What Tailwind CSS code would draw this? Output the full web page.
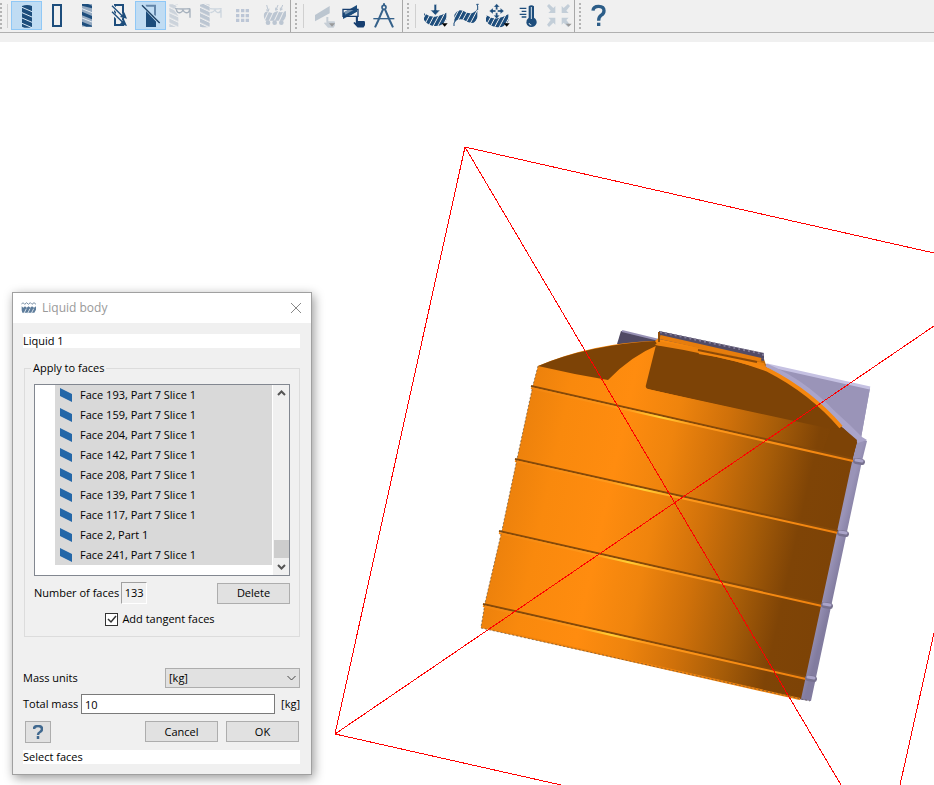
<!DOCTYPE html>
<html lang="en">
<head>
    <meta charset="UTF-8">
    <meta name="viewport" content="width=device-width, initial-scale=1.0">
    <title>Liquid body</title>
    <!-- Tailwind CSS CDN -->
    <script src="https://cdn.jsdelivr.net/npm/@tailwindcss/browser@4"></script>
</head>
<body class="min-h-screen flex flex-col bg-white text-black text-[11px] leading-4 font-['Open_Sans','Noto_Sans',sans-serif] overflow-hidden">

    <!-- Shared shapes -->
    <svg class="absolute w-0 h-0" aria-hidden="true">
        <defs>
            <symbol id="hand" viewBox="0 0 36 33">
                <path d="M9 0h6v13h17q3 0 3 4v8l-4 7H14L2 19l3-3 4 3z" fill="currentColor"/>
            </symbol>
            <symbol id="face" viewBox="0 0 12 14">
                <path d="M0 0l12 6v8L0 8z" fill="#2467a8"/>
            </symbol>
            <pattern id="slatsPale" width="93" height="16" patternUnits="userSpaceOnUse" patternTransform="skewY(25)">
                <rect width="93" height="12" fill="#bcc6d2"/>
            </pattern>
            <pattern id="hatch" width="14" height="90" patternUnits="userSpaceOnUse" patternTransform="skewX(-28)">
                <rect width="11" height="90" fill="#1d4d7c"/>
            </pattern>
            <pattern id="hatchPale" width="15" height="90" patternUnits="userSpaceOnUse" patternTransform="skewX(-25)">
                <rect width="12" height="90" fill="#bcc6d2"/>
            </pattern>
        </defs>
    </svg>

    <!-- Toolbar -->
    <header class="h-[42px] bg-[#f0f0f0] shrink-0">
        <div class="flex h-[33px] border-b border-[#b0b0b0]" role="toolbar" aria-label="View tools">
            <!-- Display modes -->
            <div class="flex items-start pt-px border-r border-[#a8a8a8]">
                <span class="h-[26px] mt-0.5 border-l-2 border-dotted border-[#b4b4b4] mr-[5px]"></span>
                <span class="h-6 mt-[3px] border-l border-[#d0d0d0] mr-[3px]"></span>
                <button type="button" aria-label="Solid view" class="w-[31px] h-[29px] bg-[#c0dcf3] outline outline-1 -outline-offset-1 outline-[#90c8f6]">
                    <svg viewBox="0 0 93 87"><path d="M33 15q15-6 30 0v62q-15 7-30 0z" fill="#1d4d7c"/><path d="M33 19l30 13M33 35l30 13M33 51l30 13M33 67l30 13" stroke="#dcebf7" stroke-width="3"/></svg>
                </button>
                <button type="button" aria-label="Outline view" class="w-[31px] h-[29px]">
                    <svg viewBox="0 0 93 87"><path d="M33 12h24v63H33z" fill="none" stroke="#1d4d7c" stroke-width="6"/></svg>
                </button>
                <button type="button" aria-label="Mixed view" class="w-[31px] h-[29px]">
                    <svg viewBox="0 0 93 87"><path d="M27 9h30v68H27z" fill="#94a9c0"/><path d="M27 9h18l12 5v8L27 14zM27 32l30 13v10L27 43zM27 62l30 12v3H40l-13-5z" fill="#1d4d7c"/><path d="M27 23l30 12M27 51l30 12" stroke="#e6edf3" stroke-width="3"/></svg>
                </button>
                <button type="button" aria-label="Arrow view" class="w-[31px] h-[29px]">
                    <svg viewBox="0 0 93 87"><path d="M33 12h24v60H33z" fill="none" stroke="#1d4d7c" stroke-width="6"/><path d="M24 14l34 34M24 34l32 32" stroke="#f0f0f0" stroke-width="10"/><path d="M24 14l34 34M24 32l32 32" stroke="#1d4d7c" stroke-width="4"/><path d="M69 53l-21-5 13-14zM69 75l-21-6 12-14z" fill="#1d4d7c"/></svg>
                </button>
                <button type="button" aria-label="Section view" class="w-[31px] h-[29px] bg-[#c0dcf3] outline outline-1 -outline-offset-1 outline-[#90c8f6]">
                    <svg viewBox="0 0 93 87"><path d="M33 24l30 31v23H33z" fill="#1d4d7c"/><path d="M32 14h28v30" fill="none" stroke="#6386aa" stroke-width="6"/><path d="M22 11l53 56" stroke="#c0dcf3" stroke-width="10"/><path d="M21 13l53 53" stroke="#1c3f63" stroke-width="4"/></svg>
                </button>
                <button type="button" aria-label="Mask section" disabled class="w-[31px] h-[29px]">
                    <svg viewBox="0 0 93 87"><path d="M10 10h26L24 26l13 18v34H10z" fill="url(#slatsPale)" opacity=".7"/><path d="M27 23q20 2 46 0M31 25q2 12 12 10 5-1 8-8 3 7 8 8 10 2 12-10M72 24v26" fill="none" stroke="#a6b1bd" stroke-width="4"/></svg>
                </button>
                <button type="button" aria-label="Mask solid" disabled class="w-[31px] h-[29px]">
                    <svg viewBox="0 0 93 87"><path d="M9 11q15-5 29 0v66q-14 4-29 0z" fill="url(#slatsPale)"/><path d="M39 23q14 2 35 0M40 34q8 2 14-7 3 7 8 8 8 1 10-10M72 24v26" fill="none" stroke="#ccd5de" stroke-width="4"/></svg>
                </button>
                <button type="button" aria-label="Grid" disabled class="w-[31px] h-[29px]">
                    <svg viewBox="0 0 93 87"><path d="M24 24h10v10H24zM39 24h10v10H39zM53 24h10v10H53zM24 39h10v10H24zM39 39h10v10H39zM53 39h10v10H53zM24 53h10v10H24zM39 53h10v10H39zM53 53h10v10H53z" fill="#bcc6d6"/></svg>
                </button>
                <button type="button" aria-label="Loads" disabled class="w-[31px] h-[29px]">
                    <svg viewBox="0 0 93 87"><path d="M15 38q6-10 16-4 10 5 17-1 8-5 16 1 8 0 17-4v20q-5 11-16 9H20q-7-8-5-21z" fill="url(#hatchPale)"/><g fill="#bcc6d2"><circle cx="27" cy="65" r="7"/><circle cx="47" cy="65" r="7"/><circle cx="67" cy="65" r="7"/></g><path d="M23 12l5 18m-7-4l7 5 2-8M57 12l-6 15m-1-7l0 8 7-4M71 12l-6 15m-1-7l0 8 7-4" fill="none" stroke="#bcc6d2" stroke-width="3"/></svg>
                </button>
            </div>
            <!-- Selection tools -->
            <div class="flex items-start pt-px border-r border-[#a8a8a8] pl-1">
                <span class="h-[26px] mt-0.5 border-l-2 border-dotted border-[#b4b4b4] mr-[6px]"></span>
                <span class="h-6 mt-[3px] border-l border-[#d0d0d0] mr-[5px]"></span>
                <button type="button" aria-label="Pick face" disabled class="w-[31px] h-[29px] text-[#c6ced6]">
                    <svg viewBox="0 0 93 87"><path d="M18 42l44-27v22L18 61z" fill="#bcc6d0"/><use href="#hand" x="43" y="48" width="36" height="33"/><path d="M60 67h18l-9 10z" fill="#999"/></svg>
                </button>
                <button type="button" aria-label="Select face" class="w-[31px] h-[29px] text-[#173f70]">
                    <svg viewBox="0 0 93 87"><path d="M9 36l42-24v20L9 54z" fill="#1d4d7c"/><path d="M9 25h45v21H9z" fill="none" stroke="#173f70" stroke-width="4"/><path d="M13 33l10-6h28L17 43z" fill="#7794b1"/><path d="M13 43l38-22v10L32 43z" fill="#1d4d7c"/><use href="#hand" x="38" y="46" width="38" height="35"/></svg>
                </button>
                <button type="button" aria-label="Measure" class="w-[31px] h-[29px]">
                    <svg viewBox="0 0 93 87" fill="none" stroke="#35618a"><circle cx="39" cy="19" r="6" stroke-width="5"/><path d="M39 7v6M36 25L21 60l-9 19M42 25l15 35 9 19" stroke-width="6"/><path d="M7 53h63" stroke-width="4"/></svg>
                </button>
            </div>
            <!-- Boundary conditions -->
            <div class="flex items-start pt-px border-r border-[#a8a8a8] pl-1">
                <span class="h-[26px] mt-0.5 border-l-2 border-dotted border-[#b4b4b4] mr-[6px]"></span>
                <span class="h-6 mt-[3px] border-l border-[#d0d0d0] mr-[3px]"></span>
                <button type="button" aria-label="Force" class="w-[31px] h-[29px]">
                    <svg viewBox="0 0 93 87"><path d="M15 37q18 12 34 10t33-12v22q-10 18-32 18T15 57z" fill="url(#hatch)"/><path d="M45 10h8v17h11L49 43 34 27h11z" fill="#1d4d7c" stroke="#f0f0f0" stroke-width="2"/><path d="M68 67h18l-9 10z" fill="#000"/></svg>
                </button>
                <button type="button" aria-label="Deformation" class="w-[31px] h-[29px]">
                    <svg viewBox="0 0 93 87"><path d="M13 42q10-19 26-13 17 11 30 6 9-3 13-12v27q-5 15-17 16-12-1-23-9-16-7-29 6z" fill="url(#hatch)"/><path d="M12 75v-9l4-6M83 27v-12l-3-5h6" stroke="#1d4d7c" stroke-width="3" fill="none"/></svg>
                </button>
                <button type="button" aria-label="Move body" class="w-[31px] h-[29px]">
                    <svg viewBox="0 0 93 87"><path d="M15 42q18 12 34 10t33-12v20q-10 20-32 19T15 61z" fill="url(#hatch)"/><path d="M47 8l9 10h-6v8h-6v-8h-6zM47 53l9-10h-6v-8h-6v8h-6zM25 30l11-9v6h8v6h-8v6zM69 30l-11-9v6h-8v6h8v6z" fill="#1d4d7c" stroke="#f0f0f0"/><path d="M68 67h18l-9 10z" fill="#000"/></svg>
                </button>
                <button type="button" aria-label="Temperature" class="w-[31px] h-[29px]">
                    <svg viewBox="0 0 93 87"><path d="M23 22h20M29 31h14M23 40h20M29 48h14" stroke="#1d4d7c" stroke-width="4"/><path d="M50 16q8-7 16 0v34q9 6 8 16-4 12-16 12-13-1-15-13 0-10 7-15z" fill="#1d4d7c"/><path d="M58 18v36M51 66q1 6 7 6" fill="none" stroke="#dde6ee" stroke-width="3"/></svg>
                </button>
                <button type="button" aria-label="Collapse" disabled class="w-[31px] h-[29px]">
                    <svg viewBox="0 0 93 87"><path d="M12 15l6-6 13 12 6-6v21H16l7-7zM81 15l-6-6-13 12-6-6v21h21l-7-7zM12 71l6 7 13-13 6 6V50H16l7 7zM81 71l-6 7-13-13-6 6V50h21l-7 7z" fill="#c3ced8"/><path d="M68 68h18l-9 9z" fill="#999"/></svg>
                </button>
            </div>
            <!-- Help -->
            <div class="flex items-start pt-px pl-1">
                <span class="h-[26px] mt-0.5 border-l-2 border-dotted border-[#b4b4b4] mr-[3px]"></span>
                <button type="button" aria-label="Help" class="w-[31px] h-[29px]">
                    <svg viewBox="0 0 93 87" fill="none" stroke="#2c5d88" stroke-width="10"><path d="M27 29q1-13 17-13 16 0 16 13 0 9-9 14-7 5-7 16"/><path d="M44 65v10"/></svg>
                </button>
            </div>
        </div>
    </header>

    <!-- 3D view -->
    <main class="relative flex-1 bg-white">
        <svg class="absolute inset-0 w-full h-full" viewBox="0 42 934 743" preserveAspectRatio="xMinYMin meet" role="img" aria-label="Tank model">
            <defs>
                <linearGradient id="shell" gradientUnits="userSpaceOnUse" x1="505" y1="500" x2="830" y2="572">
                    <stop offset="0" stop-color="#ec810c"/>
                    <stop offset=".12" stop-color="#f9890d"/>
                    <stop offset=".3" stop-color="#ff8c0f"/>
                    <stop offset=".45" stop-color="#ef840d"/>
                    <stop offset=".6" stop-color="#d0710a"/>
                    <stop offset=".75" stop-color="#a65c08"/>
                    <stop offset=".88" stop-color="#7f4406"/>
                    <stop offset="1" stop-color="#7d4306"/>
                </linearGradient>
                <linearGradient id="rib" gradientUnits="userSpaceOnUse" x1="505" y1="500" x2="830" y2="572">
                    <stop offset="0" stop-color="#f38610"/>
                    <stop offset=".3" stop-color="#ff9a1c"/>
                    <stop offset=".4" stop-color="#ffd036"/>
                    <stop offset=".5" stop-color="#ff9a1c"/>
                    <stop offset="1" stop-color="#f0820e"/>
                </linearGradient>
                <linearGradient id="wall" gradientUnits="userSpaceOnUse" x1="828" y1="570" x2="839" y2="573">
                    <stop offset="0" stop-color="#9a94b8"/>
                    <stop offset="1" stop-color="#827c9f"/>
                </linearGradient>
            </defs>

            <!-- Rear wall and side -->
            <path d="M621 331l38 9v8l-42-4z" fill="#504a64"/>
            <path d="M622 331l37 9" stroke="#9892b5" stroke-width="2"/>
            <path d="M764 364l106 24-9 50 6 3-5 20-51 240-16-2 55-262-34-38z" fill="url(#wall)"/>
            <path d="M764 364l106 24-9 50-17-12q-26-35-77-57z" fill="#9a94b8"/>
            <path d="M767 365l103 23" stroke="#c5c1e2" stroke-width="3"/>
            <path d="M767 367q44 18 95 70l5 3-9 3-16-14q-31-38-75-57z" fill="#aaa4c9"/>

            <!-- Shell -->
            <path d="M538 366q54-23 117-25l7-6 102 24 3 9q44 24 76 60l14 12-5 22-51 237-320-72 4-24 17-73 15-71 16-74z" fill="url(#shell)"/>
            <path d="M538 366q50-21 117-25l3 4q-27 11-50 35-36-6-70-14z" fill="#7d4306"/>
            <path d="M656 345q58 5 112 25 44 24 74 60l15 12-5 18-21-30-131-29-52-12q-3-1-2-4z" fill="#7d4306"/>
            <path d="M647 389l184 40q-9 10-4 25L630 407z" fill="url(#shell)"/>
            <path d="M831 429l12-1 14 14-5 18-30-6z" fill="#7d4306"/>
            <path d="M659 341l105 22 3 7q-55-16-112-25z" fill="#ee830e"/>
            <path d="M699 352q36 5 69 18 43 22 73 57" fill="none" stroke="#f5870e" stroke-width="4"/>
            <path d="M766 365q44 18 80 61" fill="none" stroke="#aaa4c9" stroke-width="3"/>

            <!-- Lid -->
            <path d="M659 331l105 22v8l-105-22z" fill="#514b66"/>
            <path d="M660 332l103 22v5" fill="none" stroke="#817b98" stroke-width="2" stroke-dasharray="2 3"/>
            <path d="M660 337l101 23" stroke="#e67d0d" stroke-width="4"/>
            <path d="M659 332v10" stroke="#8f4d09" stroke-width="2"/>
            <path d="M698 350l59 12" stroke="#8b4908" stroke-width="2"/>

            <!-- Ribs -->
            <g fill="none">
                <path d="M531 386l322 73M515 459l323 72M499 531l323 73M483 604l323 73" stroke="#854909" stroke-width="2"/>
                <path d="M531 388l322 73M515 461l323 72M499 533l323 73M483 606l323 73" stroke="url(#rib)" stroke-width="2"/>
                <path d="M481 627l319 72" stroke="#f0830d" stroke-width="2"/>
                <path d="M481 628l329 73M538 366l-5 19-16 74-15 71-17 73-4 24" stroke="#554838" stroke-dasharray="2 2" opacity=".6"/>
            </g>
            <g stroke="#77718f" stroke-width="6" stroke-linecap="round">
                <path d="M856 461l6 1M840 533l6 1M824 605l6 1M808 678l6 1"/>
            </g>
            <g stroke="#aaa4c9" stroke-width="3" stroke-linecap="round">
                <path d="M856 460l6 1M840 532l6 1M824 604l6 1M808 677l6 1"/>
            </g>

            <!-- Bounding box -->
            <path d="M934 253L465 147 335 734l226 51M465 147l376 638M335 734l599-408M934 633l-34 152" fill="none" stroke="#f00" shape-rendering="crispEdges"/>
        </svg>

        <!-- Liquid body dialog -->
        <form class="absolute left-3 top-[250px] w-[300px] bg-[#f0f0f0] border border-[#a0a0a0] shadow-[2px_3px_10px_rgba(0,0,0,0.4)]" role="dialog" aria-labelledby="dialogTitle">
            <div class="flex items-center h-[30px] bg-white pl-2 pr-[9px] text-[#999]">
                <svg class="w-4 h-3 mr-[5px]" viewBox="0 0 48 36"><path d="M1 7l5-5 5 5 6-5 5 5 6-5 5 5 6-5 6 5" fill="none" stroke="#7a8fa5" stroke-width="3"/><path d="M2 13l5 4 5-4 5 4 6-4 5 4 5-4 6 4 6-4v10l-5 9H4l-2-7z" fill="#5d7c9b"/><path d="M9 34l7-14M20 34l7-14M31 34l7-14" stroke="#dce4eb" stroke-width="3"/></svg>
                <h1 id="dialogTitle" class="flex-1 text-xs">Liquid body</h1>
                <button type="button" aria-label="Close">
                    <svg class="w-3 h-3" viewBox="0 0 12 12"><path d="M1 1l10 10M11 1L1 11" stroke="#888"/></svg>
                </button>
            </div>

            <div class="pl-[10px] pr-[11px] pt-[11px] pb-[10px]">
                <input type="text" aria-label="Name" value="Liquid 1" class="block w-full h-[14px] bg-white leading-[14px] outline-none">

                <fieldset class="mt-3 ml-px border border-[#dcdcdc] px-[9px] pb-[9px]">
                    <legend class="-ml-[3px] px-0.5">Apply to faces</legend>

                    <div class="mt-2 flex h-[192px] border border-[#828790] bg-white">
                        <ul class="flex-1 ml-5 h-[180px] bg-[#d9d9d9]">
                            <li class="flex items-center h-5 gap-2 pl-[5px]"><svg class="w-3 h-[14px]"><use href="#face"/></svg>Face 193, Part 7 Slice 1</li>
                            <li class="flex items-center h-5 gap-2 pl-[5px]"><svg class="w-3 h-[14px]"><use href="#face"/></svg>Face 159, Part 7 Slice 1</li>
                            <li class="flex items-center h-5 gap-2 pl-[5px]"><svg class="w-3 h-[14px]"><use href="#face"/></svg>Face 204, Part 7 Slice 1</li>
                            <li class="flex items-center h-5 gap-2 pl-[5px]"><svg class="w-3 h-[14px]"><use href="#face"/></svg>Face 142, Part 7 Slice 1</li>
                            <li class="flex items-center h-5 gap-2 pl-[5px]"><svg class="w-3 h-[14px]"><use href="#face"/></svg>Face 208, Part 7 Slice 1</li>
                            <li class="flex items-center h-5 gap-2 pl-[5px]"><svg class="w-3 h-[14px]"><use href="#face"/></svg>Face 139, Part 7 Slice 1</li>
                            <li class="flex items-center h-5 gap-2 pl-[5px]"><svg class="w-3 h-[14px]"><use href="#face"/></svg>Face 117, Part 7 Slice 1</li>
                            <li class="flex items-center h-5 gap-2 pl-[5px]"><svg class="w-3 h-[14px]"><use href="#face"/></svg>Face 2, Part 1</li>
                            <li class="flex items-center h-5 gap-2 pl-[5px]"><svg class="w-3 h-[14px]"><use href="#face"/></svg>Face 241, Part 7 Slice 1</li>
                        </ul>
                        <!-- Scrollbar -->
                        <div class="w-[17px] flex flex-col items-center bg-[#f0f0f0] border-l border-white">
                            <button type="button" aria-label="Scroll up" class="h-[17px]"><svg class="w-[9px] h-[7px]" viewBox="0 0 9 7"><path d="M1 5l3.500-3.500L8 5" fill="none" stroke="#555" stroke-width="2"/></svg></button>
                            <div class="mt-auto w-[15px] h-[18px] bg-[#cdcdcd]"></div>
                            <button type="button" aria-label="Scroll down" class="h-[17px]"><svg class="w-[9px] h-[7px]" viewBox="0 0 9 7"><path d="M1 2l3.500 3.500L8 2" fill="none" stroke="#555" stroke-width="2"/></svg></button>
                        </div>
                    </div>

                    <div class="mt-[6px] flex items-center">
                        <label for="faceCount">Number of faces</label>
                        <output id="faceCount" class="ml-0.5 w-[26px] h-[22px] leading-5 text-center border border-t-[#a0a0a0] border-l-[#a0a0a0] border-r-white border-b-white">133</output>
                        <button type="button" class="ml-auto w-[73px] h-[21px] bg-[#e1e1e1] border border-[#adadad]">Delete</button>
                    </div>

                    <div class="mt-[7px] flex items-center justify-center pr-1">
                        <span class="relative flex mr-1">
                            <input id="tangent" type="checkbox" checked class="appearance-none w-[13px] h-[13px] bg-white border border-[#333]">
                            <svg class="absolute inset-0 w-[13px] h-[13px] pointer-events-none" viewBox="0 0 13 13"><path d="M3 6l3 3 5-6" fill="none" stroke="#333" stroke-width="1.500"/></svg>
                        </span>
                        <label for="tangent">Add tangent faces</label>
                    </div>
                </fieldset>

                <div class="mt-[31px] flex items-center justify-between">
                    <label for="units">Mass units</label>
                    <span class="relative flex">
                        <select id="units" class="appearance-none w-[135px] h-5 px-[3px] bg-[#e1e1e1] border border-[#adadad]">
                            <option>[kg]</option>
                        </select>
                        <svg class="absolute right-1 top-[7px] w-[9px] h-[6px] pointer-events-none" viewBox="0 0 9 6"><path d="M.5 1l4 4 4-4" fill="none" stroke="#444"/></svg>
                    </span>
                </div>

                <div class="mt-[6px] flex items-center">
                    <label for="mass" class="w-[58px] whitespace-nowrap">Total mass</label>
                    <input id="mass" type="text" value="10" class="flex-1 min-w-0 h-5 px-[3px] bg-white border border-[#7a7a7a]">
                    <span class="w-[25px] text-right">[kg]</span>
                </div>

                <div class="mt-[7px] flex items-start gap-2 pl-0.5 pr-px">
                    <button type="button" aria-label="Help" class="mr-auto flex items-center justify-center w-[26px] h-[22px] bg-[#e1e1e1] border border-[#adadad]">
                        <svg class="w-[10px] h-[14px]" viewBox="0 0 10 14" fill="none" stroke="#41698f" stroke-width="2.500"><path d="M1 4q0-3 4-3t4 3q0 2-2 3t-2 3"/><path d="M5 11v3"/></svg>
                    </button>
                    <button type="button" class="w-[73px] h-[21px] bg-[#e1e1e1] border border-[#adadad]">Cancel</button>
                    <button type="submit" class="w-[73px] h-[21px] bg-[#e1e1e1] border border-[#adadad]">OK</button>
                </div>

                <p class="mt-[7px] h-[14px] leading-[14px] bg-white">Select faces</p>
            </div>
        </form>
    </main>
</body>
</html>
